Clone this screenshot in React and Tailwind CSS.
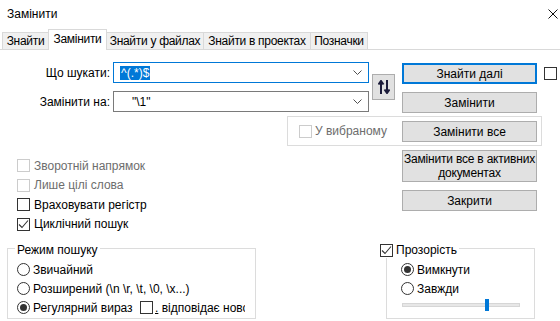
import clsx from 'clsx'

function CheckBox({ checked, disabled }) {
  return (
    <span
      className={clsx(
        'flex h-[13px] w-[13px] shrink-0 items-center justify-center border bg-white',
        disabled ? 'border-[#cccccc]' : 'border-[#333333]'
      )}
    >
      {checked && (
        <svg width="11" height="11" viewBox="0 0 11 11">
          <path d="M1 5.5 L4 8.5 L10 1.5" fill="none" stroke="#333333" strokeWidth="1.1" />
        </svg>
      )}
    </span>
  )
}

function Radio({ checked }) {
  return (
    <span className="flex h-[13px] w-[13px] shrink-0 items-center justify-center rounded-full border border-[#333333] bg-white">
      {checked && <span className="h-[7px] w-[7px] rounded-full bg-[#333333]" />}
    </span>
  )
}

function Chevron() {
  return (
    <svg width="9" height="5" viewBox="0 0 9 5" className="shrink-0">
      <path d="M0.5 0.5 L4.5 4.5 L8.5 0.5" fill="none" stroke="#505050" strokeWidth="1" />
    </svg>
  )
}

function Combo({ focused, children }) {
  return (
    <div
      className={clsx(
        'ml-[3px] flex h-[21px] w-[256px] items-center justify-between border bg-white pr-[6px]',
        focused ? 'border-[#0078d7]' : 'border-[#7a7a7a]'
      )}
    >
      {children}
      <Chevron />
    </div>
  )
}

function Btn({ primary, className, children }) {
  return (
    <div
      className={clsx(
        'flex items-center justify-center bg-[#e1e1e1] text-center whitespace-nowrap',
        primary ? 'border-2 border-[#0078d7]' : 'border border-[#adadad]',
        className
      )}
    >
      {children}
    </div>
  )
}

function CheckRow({ checked, disabled, children }) {
  return (
    <div className="flex h-[19.5px] items-center gap-[4px]">
      <CheckBox checked={checked} disabled={disabled} />
      <span className={disabled ? 'text-[#6d6d6d]' : ''}>{children}</span>
    </div>
  )
}

const tabs = [
  { label: 'Знайти', w: 'w-[47px]' },
  { label: 'Замінити', w: 'w-[59px]', active: true },
  { label: 'Знайти у файлах', w: 'w-[98px]' },
  { label: 'Знайти в проектах', w: 'w-[108px]' },
  { label: 'Позначки', w: 'w-[58px]' },
]

export default function App() {
  return (
    <div className="h-[321px] w-[560px] overflow-hidden bg-white font-['Liberation_Sans',sans-serif] text-[12px] leading-[16px] text-black">
      {/* title bar */}
      <div className="flex h-[28px] items-center justify-between pl-[7px] pr-[2px]">
        <span>Замінити</span>
        <svg width="10" height="10" viewBox="0 0 10 10">
          <path d="M0.5 0.5 L9.5 9.5 M9.5 0.5 L0.5 9.5" stroke="#111111" strokeWidth="1" />
        </svg>
      </div>

      {/* tabs */}
      <div className="flex h-[22px] items-end border-b border-[#d9d9d9] pl-[2px] tracking-[-0.3px]">
        {tabs.map((t, i) => (
          <div
            key={t.label}
            className={clsx(
              'flex shrink-0 justify-center border-x border-t border-[#d9d9d9] whitespace-nowrap',
              t.w,
              i > 0 && '-ml-px',
              t.active
                ? 'relative z-10 -mb-px h-[21px] items-start bg-white pt-[1px]'
                : 'h-[17px] items-center bg-[#f0f0f0]'
            )}
          >
            {t.label}
          </div>
        ))}
      </div>

      {/* upper part */}
      <div className="flex">
        <div className="w-[402px] shrink-0">
          <div className="flex pt-[12px]">
            <div className="flex flex-col gap-[8px]">
              <div className="flex items-center">
                <span className="w-[110px] text-right">Що шукати:</span>
                <Combo focused>
                  <span className="ml-[6px] bg-[#0078d7] px-px leading-[14px] text-white">^(.*)$</span>
                </Combo>
              </div>
              <div className="flex items-center">
                <span className="w-[110px] text-right">Замінити на:</span>
                <Combo>
                  <span className="ml-[18px] whitespace-pre">"\1"</span>
                </Combo>
              </div>
            </div>
            <Btn className="mt-[12px] ml-[3px] h-[26px] w-[23px]">
              <svg width="12" height="14" viewBox="0 0 12 14">
                <path d="M3 14 V2.5 M0.5 4.5 L3 1 L5.5 4.5" fill="none" stroke="#1b1b3a" strokeWidth="2" />
                <path d="M9 0 V11.5 M6.5 9.5 L9 13 L11.5 9.5" fill="none" stroke="#1b1b3a" strokeWidth="2" />
              </svg>
            </Btn>
          </div>

          <div className="mt-[4px] ml-[287px] flex h-[30px] w-[255px] items-center gap-[3px] border border-[#dcdcdc] pl-[11px]">
            <CheckBox disabled />
            <span className="text-[#6d6d6d]">У вибраному</span>
          </div>

          <div className="mt-[10px] pl-[17px]">
            <CheckRow disabled>Зворотній напрямок</CheckRow>
            <CheckRow disabled>Лише цілі слова</CheckRow>
            <CheckRow>Враховувати регістр</CheckRow>
            <CheckRow checked>Циклічний пошук</CheckRow>
          </div>
        </div>

        <div className="flex w-[135px] shrink-0 flex-col gap-[8px] pt-[13px]">
          <Btn primary className="h-[21px]">Знайти далі</Btn>
          <Btn className="h-[21px]">Замінити</Btn>
          <Btn className="h-[21px]">Замінити все</Btn>
          <Btn className="h-[32px] flex-col leading-[14px] tracking-[-0.2px]">
            <span>Замінити все в активних</span>
            <span>документах</span>
          </Btn>
          <Btn className="h-[21px]">Закрити</Btn>
        </div>

        <div className="mt-[17px] ml-[7px]">
          <CheckBox />
        </div>
      </div>

      {/* lower part */}
      <div className="mt-[4px] flex">
        <fieldset className="ml-[7px] h-[81px] w-[249px] min-w-0 border border-[#dcdcdc]">
          <legend className="ml-[7px] px-[2px] pt-[4px]">Режим пошуку</legend>
          <div className="mt-[2px] pl-[9px]">
            <div className="flex h-[19px] items-center gap-[3px]">
              <Radio />
              <span>Звичайний</span>
            </div>
            <div className="flex h-[19px] items-center gap-[3px]">
              <Radio />
              <span>Розширений (\n \r, \t, \0, \x...)</span>
            </div>
            <div className="flex h-[19px] items-center">
              <div className="flex w-[123px] shrink-0 items-center gap-[3px]">
                <Radio checked />
                <span>Регулярний вираз</span>
              </div>
              <div className="flex w-[105px] items-center gap-[2px] overflow-hidden whitespace-nowrap">
                <CheckBox />
                <span>
                  <span className="underline">.</span> відповідає новому рядку
                </span>
              </div>
            </div>
          </div>
        </fieldset>

        <fieldset className="ml-[130px] h-[81px] w-[149px] min-w-0 border border-[#dcdcdc]">
          <legend className="-ml-[7px] pr-[2px] pt-[4px]">
            <span className="flex items-center gap-[3px]">
              <CheckBox checked />
              <span>Прозорість</span>
            </span>
          </legend>
          <div className="mt-[2px] pl-[14px]">
            <div className="flex h-[19px] items-center gap-[3px]">
              <Radio checked />
              <span>Вимкнути</span>
            </div>
            <div className="flex h-[19px] items-center gap-[3px]">
              <Radio />
              <span>Завжди</span>
            </div>
          </div>
          <div className="relative mt-[1px] ml-[15px] h-[12px] w-[118px]">
            <div className="absolute top-[4px] h-[4px] w-full border border-[#d6d6d6] bg-[#e7e7e7]" />
            <div className="absolute top-0 left-[83px] h-[12px] w-[4px] bg-[#0078d7]" />
          </div>
        </fieldset>
      </div>
    </div>
  )
}
